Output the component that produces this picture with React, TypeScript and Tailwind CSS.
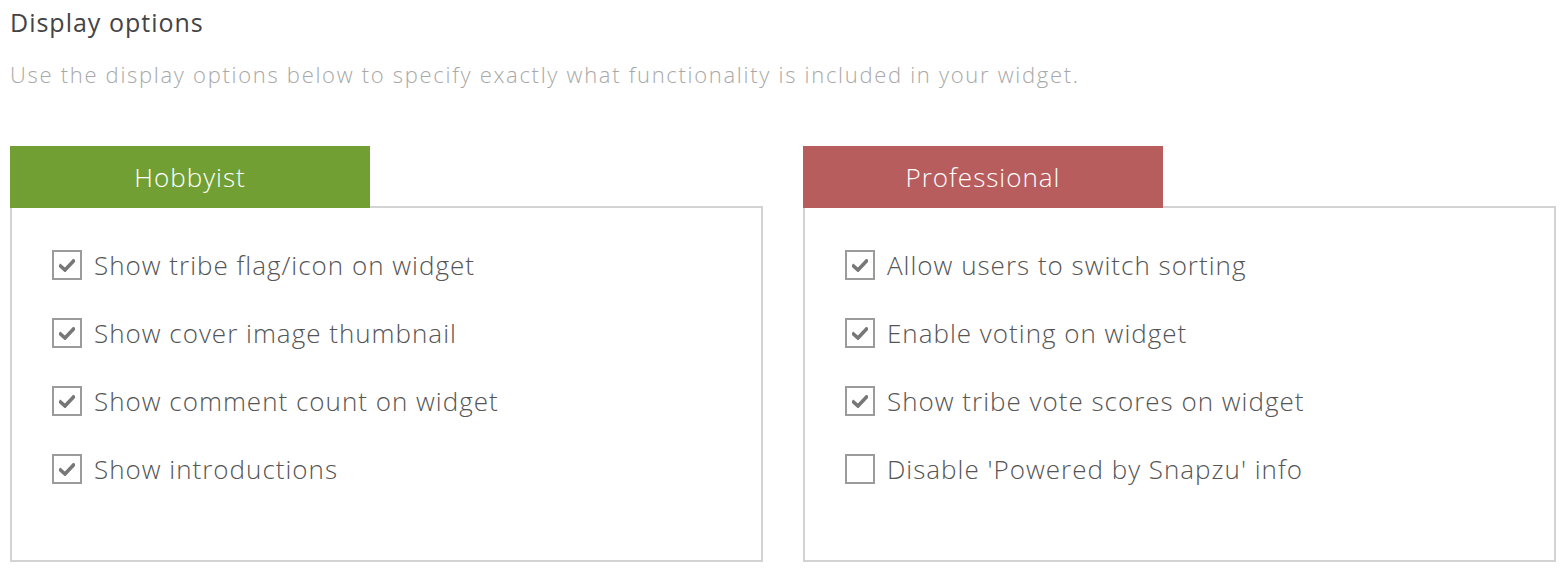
import React from 'react';

type Option = { label: string; checked: boolean };

const PLANS: { name: string; tab: string; options: Option[] }[] = [
  {
    name: 'Hobbyist',
    tab: 'bg-[#729f33]',
    options: [
      { label: 'Show tribe flag/icon on widget', checked: true },
      { label: 'Show cover image thumbnail', checked: true },
      { label: 'Show comment count on widget', checked: true },
      { label: 'Show introductions', checked: true },
    ],
  },
  {
    name: 'Professional',
    tab: 'bg-[#b85d5d]',
    options: [
      { label: 'Allow users to switch sorting', checked: true },
      { label: 'Enable voting on widget', checked: true },
      { label: 'Show tribe vote scores on widget', checked: true },
      { label: "Disable 'Powered by Snapzu' info", checked: false },
    ],
  },
];

const CheckBox = ({ checked }: { checked: boolean }) => (
  <span className="flex items-center justify-center w-[30px] h-[30px] border-2 border-[#9b9b9b] bg-white shrink-0">
    {checked && (
      <svg width="16" height="13" viewBox="0 0 16 13">
        <path d="M1.5 7 L6 11 L14.5 2" fill="none" stroke="#777" strokeWidth="3.6" strokeLinecap="square" />
      </svg>
    )}
  </span>
);

export default function App() {
  return (
    <div className="w-[1568px] h-[578px] bg-white pl-[10px] pt-[4px] font-['Open_Sans',sans-serif] overflow-hidden">
      <h2 className="text-[25px] leading-[36px] tracking-[1px] text-[#444]">Display options</h2>
      <p className="mt-[18px] text-[22px] leading-[32px] tracking-[1.7px] font-light text-[#a8a8a8]">
        Use the display options below to specify exactly what functionality is included in your widget.
      </p>

      <div className="mt-[56px] grid grid-cols-2 gap-[40px] w-[1546px]">
        {PLANS.map(plan => (
          <div key={plan.name} className="flex flex-col">
            <div className={`relative z-10 w-[360px] h-[62px] flex items-center justify-center text-white text-[26px] tracking-[1px] font-light ${plan.tab}`}>
              {plan.name}
            </div>
            <div className="-mt-[2px] h-[356px] border-2 border-[#d3d3d3] pt-[37px] pl-[40px] flex flex-col gap-[28px]">
              {plan.options.map(opt => (
                <label key={opt.label} className="h-[40px] flex items-center gap-[12px] text-[26px] tracking-[1px] font-light text-[#555]">
                  <CheckBox checked={opt.checked} />
                  {opt.label}
                </label>
              ))}
            </div>
          </div>
        ))}
      </div>
    </div>
  );
}
